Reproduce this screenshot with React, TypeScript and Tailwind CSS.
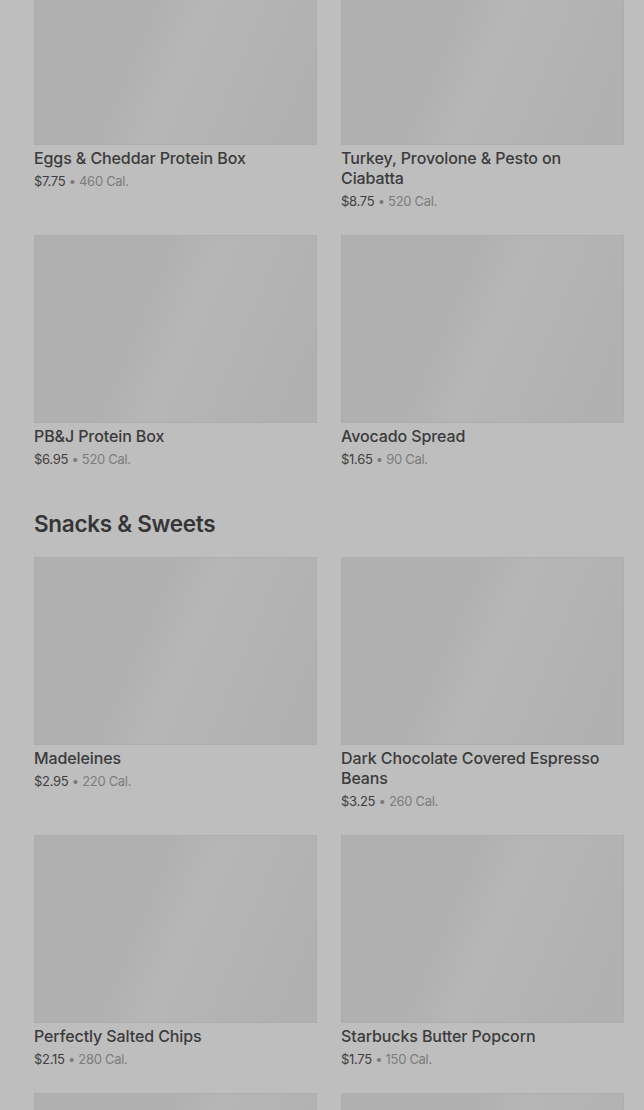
import React from "react";

type Item = { name: string; price: string; cal: string };

const top: Item[] = [
  { name: "Eggs & Cheddar Protein Box", price: "$7.75", cal: "460 Cal." },
  { name: "Turkey, Provolone & Pesto on Ciabatta", price: "$8.75", cal: "520 Cal." },
  { name: "PB&J Protein Box", price: "$6.95", cal: "520 Cal." },
  { name: "Avocado Spread", price: "$1.65", cal: "90 Cal." },
];

const snacks: Item[] = [
  { name: "Madeleines", price: "$2.95", cal: "220 Cal." },
  { name: "Dark Chocolate Covered Espresso Beans", price: "$3.25", cal: "260 Cal." },
  { name: "Perfectly Salted Chips", price: "$2.15", cal: "280 Cal." },
  { name: "Starbucks Butter Popcorn", price: "$1.75", cal: "150 Cal." },
  { name: "", price: "", cal: "" },
  { name: "", price: "", cal: "" },
];

const Card = ({ item }: { item: Item }) => (
  <div className="flex flex-col">
    <div className="h-[188px] w-full border border-[#adadad] bg-[linear-gradient(113deg,#b0b0b0_0%,#b0b0b0_38%,#b6b6b6_52%,#b4b4b4_68%,#b1b1b1_85%,#b0b0b0_100%)]" />
    {item.name && (
      <>
        <div className="mt-[3px] text-[16px] leading-[20px] font-medium tracking-[-0.1px] text-[#3b3b3b]">{item.name}</div>
        <div className="mt-[3px] text-[13px] leading-[20px] tracking-[-0.3px] text-[#7c7c7c]">
          <span className="text-[#404040]">{item.price}</span> • {item.cal}
        </div>
      </>
    )}
  </div>
);

export default function App() {
  return (
    <div
      className="h-[1110px] w-[644px] overflow-hidden bg-[#bebebe] pl-[34px] pr-[20px]"
      style={{ fontFamily: "Inter, 'Noto Sans', sans-serif" }}
    >
      <div className="-mt-[43px] grid grid-cols-2 gap-x-[24px] gap-y-[24px]">
        {top.map((it, i) => (
          <Card key={i} item={it} />
        ))}
      </div>
      <h2 className="mt-[39px] mb-[17px] text-[22.5px] leading-[32px] font-semibold tracking-[-0.3px] text-[#363636]">
        Snacks &amp; Sweets
      </h2>
      <div className="grid grid-cols-2 gap-x-[24px] gap-y-[24px]">
        {snacks.map((it, i) => (
          <Card key={i} item={it} />
        ))}
      </div>
    </div>
  );
}
